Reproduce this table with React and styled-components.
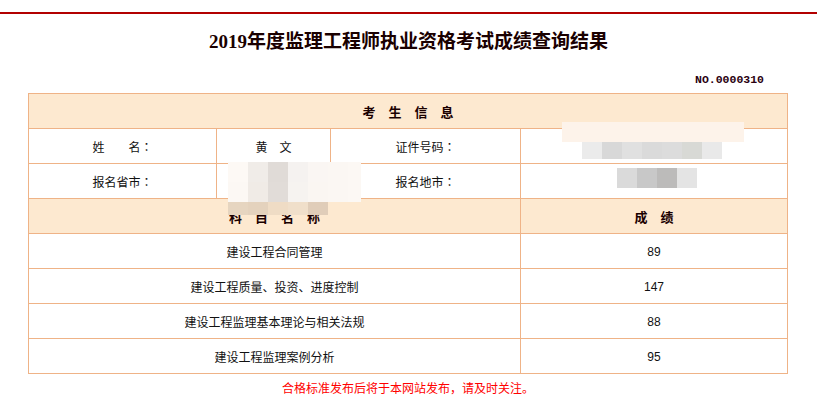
import React from "react";
import styled, { createGlobalStyle } from "styled-components";

const GlobalStyle = createGlobalStyle`
  body {
    margin: 0;
    background: #fff;
    font-family: "Liberation Sans", "Noto Sans CJK SC", sans-serif;
    font-size: 12px;
    color: #111;
  }
`;

const Page = styled.div`
  padding-top: 12px;
`;

const TopBar = styled.div`
  border-top: 2px solid #b20000;
`;

const Title = styled.h1`
  margin: 16px 0 0;
  text-align: center;
  font-family: "Liberation Serif", "Noto Sans CJK SC", serif;
  font-size: 19px;
  line-height: 24px;
  font-weight: bold;
  color: #1a0000;
`;

const Sheet = styled.div`
  width: 760px;
  margin: 0 29px 0 28px;
`;

const Serial = styled.div`
  margin-top: 19px;
  padding-right: 24px;
  text-align: right;
  font-family: "Liberation Mono", monospace;
  font-size: 11.5px;
  line-height: 14px;
  font-weight: bold;
  color: #2a0010;
`;

const TableWrap = styled.div`
  position: relative;
  margin-top: 6px;
`;

const Grid = styled.div`
  display: grid;
  grid-template-columns: 188px 114px 190px 267px;
  grid-auto-rows: 35px;
  border-left: 1px solid #efb387;
  border-top: 1px solid #efb387;
`;

const Cell = styled.div`
  box-sizing: border-box;
  display: flex;
  align-items: center;
  justify-content: center;
  border-right: 1px solid #efb387;
  border-bottom: 1px solid #efb387;
  grid-column: ${(p) => p.$span || "auto"};
  background: ${(p) => (p.$head ? "#fde9d0" : "#fff")};
  font-size: ${(p) => (p.$head ? "13px" : "12px")};
  font-weight: ${(p) => (p.$head ? "bold" : "normal")};
  color: ${(p) => (p.$head ? "#1a0000" : "#111")};
  letter-spacing: ${(p) => (p.$head ? "13px" : "0")};
  padding-left: ${(p) => (p.$head ? "13px" : "0")};
  padding-top: 1px;
`;

const Colon = styled.span`
  font-family: "Noto Sans CJK TC", "Noto Sans CJK SC", sans-serif;
`;

const Notice = styled.p`
  margin: 7px 0 0;
  text-align: center;
  font-size: 12px;
  line-height: 16px;
  color: #f00;
`;

const Mosaic = styled.div`
  position: absolute;
  left: ${(p) => p.$x}px;
  top: ${(p) => p.$y}px;
  display: flex;
  flex-direction: column;
`;

const MosaicRow = styled.div`
  display: flex;
  height: ${(p) => p.$h}px;
`;

const Tile = styled.div`
  width: ${(p) => p.$w || 20}px;
  height: 100%;
  background: ${(p) => p.$bg};
`;

const subjects = [
  ["建设工程合同管理", "89"],
  ["建设工程质量、投资、进度控制", "147"],
  ["建设工程监理基本理论与相关法规", "88"],
  ["建设工程监理案例分析", "95"],
];

// pixelated privacy blur over the personal data
const mosaics = [
  {
    x: 200,
    y: 69,
    rows: [
      { h: 20, tiles: ["#fdf9f5", "#f0ece8", "#e0dbd7", "#f5f2f0", "#faf6f3", "#fbf7f3", ["#fcf8f4", 13]] },
      { h: 20, tiles: ["#fcf8f4", "#f0ebe6", "#e1dcd8", "#f6f3f0", "#faf6f2", "#fbf7f3", ["#fcf8f4", 13]] },
      { h: 13, tiles: ["#e6d5c0", "#e4d2bd", "#efdcc5", "#f0dfca", "#e0cdb9"] },
    ],
  },
  {
    x: 534,
    y: 29,
    rows: [{ h: 20, tiles: [["#fdf3ea", 182]] }],
  },
  {
    x: 554,
    y: 49,
    rows: [{ h: 17, tiles: ["#ebebeb", "#d8d8d8", "#e0e0e0", "#dadada", "#dcdcdc", "#d8d9d5", "#e9e9e9"] }],
  },
  {
    x: 589,
    y: 75,
    rows: [{ h: 20, tiles: ["#dadada", "#c8c8c8", "#bcbbba", "#e4e4e4"] }],
  },
];

const Label = ({ children }) => (
  <Cell>
    {children}
    <Colon>：</Colon>
  </Cell>
);

export default function App() {
  return (
    <Page>
      <GlobalStyle />
      <TopBar />
      <Title>2019年度监理工程师执业资格考试成绩查询结果</Title>
      <Sheet>
        <Serial>NO.0000310</Serial>
        <TableWrap>
          <Grid>
            <Cell $head $span="1 / 5">考生信息</Cell>
            <Label>姓　　名</Label>
            <Cell>黄　文</Cell>
            <Label>证件号码</Label>
            <Cell />
            <Label>报名省市</Label>
            <Cell />
            <Label>报名地市</Label>
            <Cell />
            <Cell $head $span="1 / 4">科目名称</Cell>
            <Cell $head>成绩</Cell>
            {subjects.map(([name, score]) => (
              <React.Fragment key={name}>
                <Cell $span="1 / 4">{name}</Cell>
                <Cell>{score}</Cell>
              </React.Fragment>
            ))}
          </Grid>
          {mosaics.map((m, i) => (
            <Mosaic key={i} $x={m.x} $y={m.y}>
              {m.rows.map((r, j) => (
                <MosaicRow key={j} $h={r.h}>
                  {r.tiles.map((t, k) =>
                    Array.isArray(t) ? (
                      <Tile key={k} $bg={t[0]} $w={t[1]} />
                    ) : (
                      <Tile key={k} $bg={t} />
                    )
                  )}
                </MosaicRow>
              ))}
            </Mosaic>
          ))}
        </TableWrap>
        <Notice>合格标准发布后将于本网站发布，请及时关注。</Notice>
      </Sheet>
    </Page>
  );
}
